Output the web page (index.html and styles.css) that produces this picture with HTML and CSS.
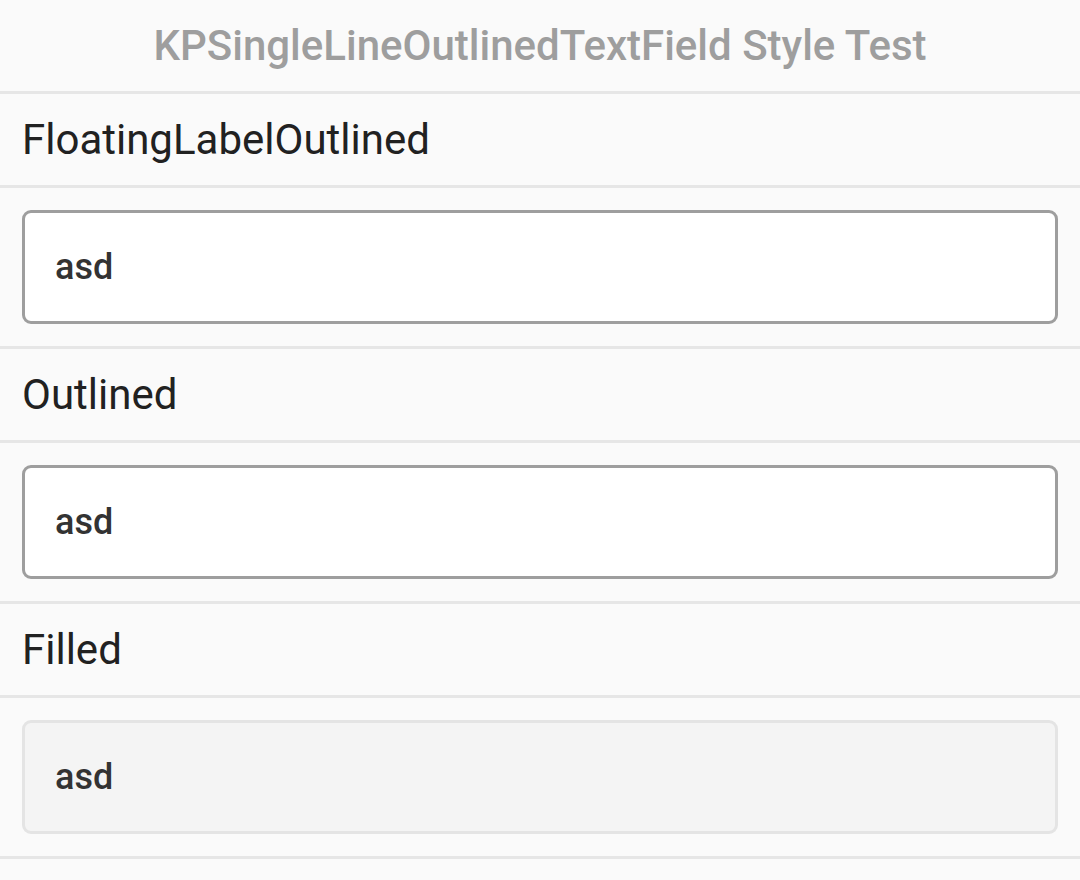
FILE: index.html
```html
<!DOCTYPE html>
<html>
<head>
<meta charset="utf-8">
<link rel="stylesheet" href="styles.css">
</head>
<body>
<div class="page">
  <header class="title-bar">KPSingleLineOutlinedTextField Style Test</header>
  <div class="label-row">FloatingLabelOutlined</div>
  <div class="field-row"><div class="field outlined">asd</div></div>
  <div class="label-row">Outlined</div>
  <div class="field-row"><div class="field outlined">asd</div></div>
  <div class="label-row">Filled</div>
  <div class="field-row"><div class="field filled">asd</div></div>
</div>
</body>
</html>
```
FILE: styles.css
```css
html, body {
  margin: 0;
  padding: 0;
  background: #fafafa;
}
body {
  font-family: Roboto, "Noto Sans", sans-serif;
  width: 1080px;
  height: 880px;
  overflow: hidden;
}
.page {
  display: flex;
  flex-direction: column;
}
.title-bar {
  height: 91px;
  display: flex;
  align-items: center;
  justify-content: center;
  font-size: 42px;
  font-weight: 500;
  color: #9e9e9e;
  border-bottom: 3px solid #e6e6e6;
}
.label-row {
  height: 91px;
  display: flex;
  align-items: center;
  padding-left: 22px;
  font-size: 42px;
  color: #212121;
  border-bottom: 3px solid #e6e6e6;
}
.field-row {
  box-sizing: border-box;
  padding: 22px;
  border-bottom: 3px solid #e6e6e6;
  height: 161px;
}
.field {
  box-sizing: border-box;
  height: 114px;
  border-radius: 9px;
  display: flex;
  align-items: center;
  padding-left: 30px;
  font-size: 36px;
  font-weight: 500;
  color: #333333;
}
.outlined {
  background: #ffffff;
  border: 3px solid #9e9e9e;
}
.filled {
  background: #f4f4f4;
  border: 3px solid #e4e4e4;
}
```
